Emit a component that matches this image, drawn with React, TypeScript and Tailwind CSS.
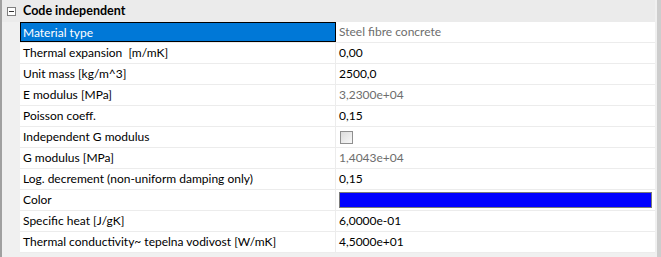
import React from "react";

type Row = {
  label: string;
  value?: string;
  kind?: "text" | "muted" | "check" | "color";
  selected?: boolean;
};

const rows: Row[] = [
  { label: "Material type", value: "Steel fibre concrete", kind: "muted", selected: true },
  { label: "Thermal expansion  [m/mK]", value: "0,00" },
  { label: "Unit mass [kg/m^3]", value: "2500,0" },
  { label: "E modulus [MPa]", value: "3,2300e+04", kind: "muted" },
  { label: "Poisson coeff.", value: "0,15" },
  { label: "Independent G modulus", kind: "check" },
  { label: "G modulus [MPa]", value: "1,4043e+04", kind: "muted" },
  { label: "Log. decrement (non-uniform damping only)", value: "0,15" },
  { label: "Color", kind: "color" },
  { label: "Specific heat [J/gK]", value: "6,0000e-01" },
  { label: "Thermal conductivity~ tepelna vodivost [W/mK]", value: "4,5000e+01" },
];

const PropRow = ({ row }: { row: Row }) => (
  <div className="flex h-[21px] border-b border-[#ececec]">
    <div
      className={
        row.selected
          ? "w-[316px] shrink-0 bg-[#0078d7] text-white border border-black pl-[2px] leading-[19px] whitespace-pre"
          : "w-[316px] shrink-0 bg-white text-black pl-[3px] leading-[20px] border-r border-[#ececec] whitespace-pre"
      }
    >
      {row.label}
    </div>
    <div className="flex-1 bg-white pl-[3px] leading-[20px] flex items-center">
      {row.kind === "check" && (
        <span className="w-[13px] h-[13px] border border-[#8f8f8f] bg-gradient-to-br from-[#dcdcdc] to-[#f8f8f8] ml-[1px]" />
      )}
      {row.kind === "color" && (
        <span className="h-[16px] w-[313px] bg-[#0000ff] border border-[#7a7a7a]" />
      )}
      {row.kind === "muted" && <span className="text-[#6d6d6d]">{row.value}</span>}
      {(row.kind === undefined || row.kind === "text") && (
        <span className="text-black">{row.value}</span>
      )}
    </div>
  </div>
);

export default function App() {
  return (
    <div
      className="w-[661px] h-[257px] overflow-hidden flex bg-[#f0f0f0] text-[12px]"
      style={{ fontFamily: '"Segoe UI", Lato, sans-serif' }}
    >
      <div className="w-[2px] bg-[#a0a0a0] shrink-0" />
      <div className="flex-1 flex flex-col">
        {/* Category header */}
        <div className="h-[22px] flex items-center bg-[#ebebeb]">
          <div className="w-[18px] shrink-0 flex justify-center">
            <span className="w-[9px] h-[9px] border border-[#7f7f7f] bg-white flex items-center justify-center">
              <span className="w-[5px] h-[1px] bg-[#333]" />
            </span>
          </div>
          <span className="font-bold text-[12.5px] text-black pl-[3px]">Code independent</span>
        </div>
        <div className="flex flex-col pl-[18px] bg-[#f0f0f0]">
          {rows.map((r) => (
            <PropRow key={r.label} row={r} />
          ))}
        </div>
      </div>
      <div className="w-[2px] bg-[#f0f0f0] shrink-0" />
      <div className="w-[4px] bg-[#cdcdcd] shrink-0" />
    </div>
  );
}
